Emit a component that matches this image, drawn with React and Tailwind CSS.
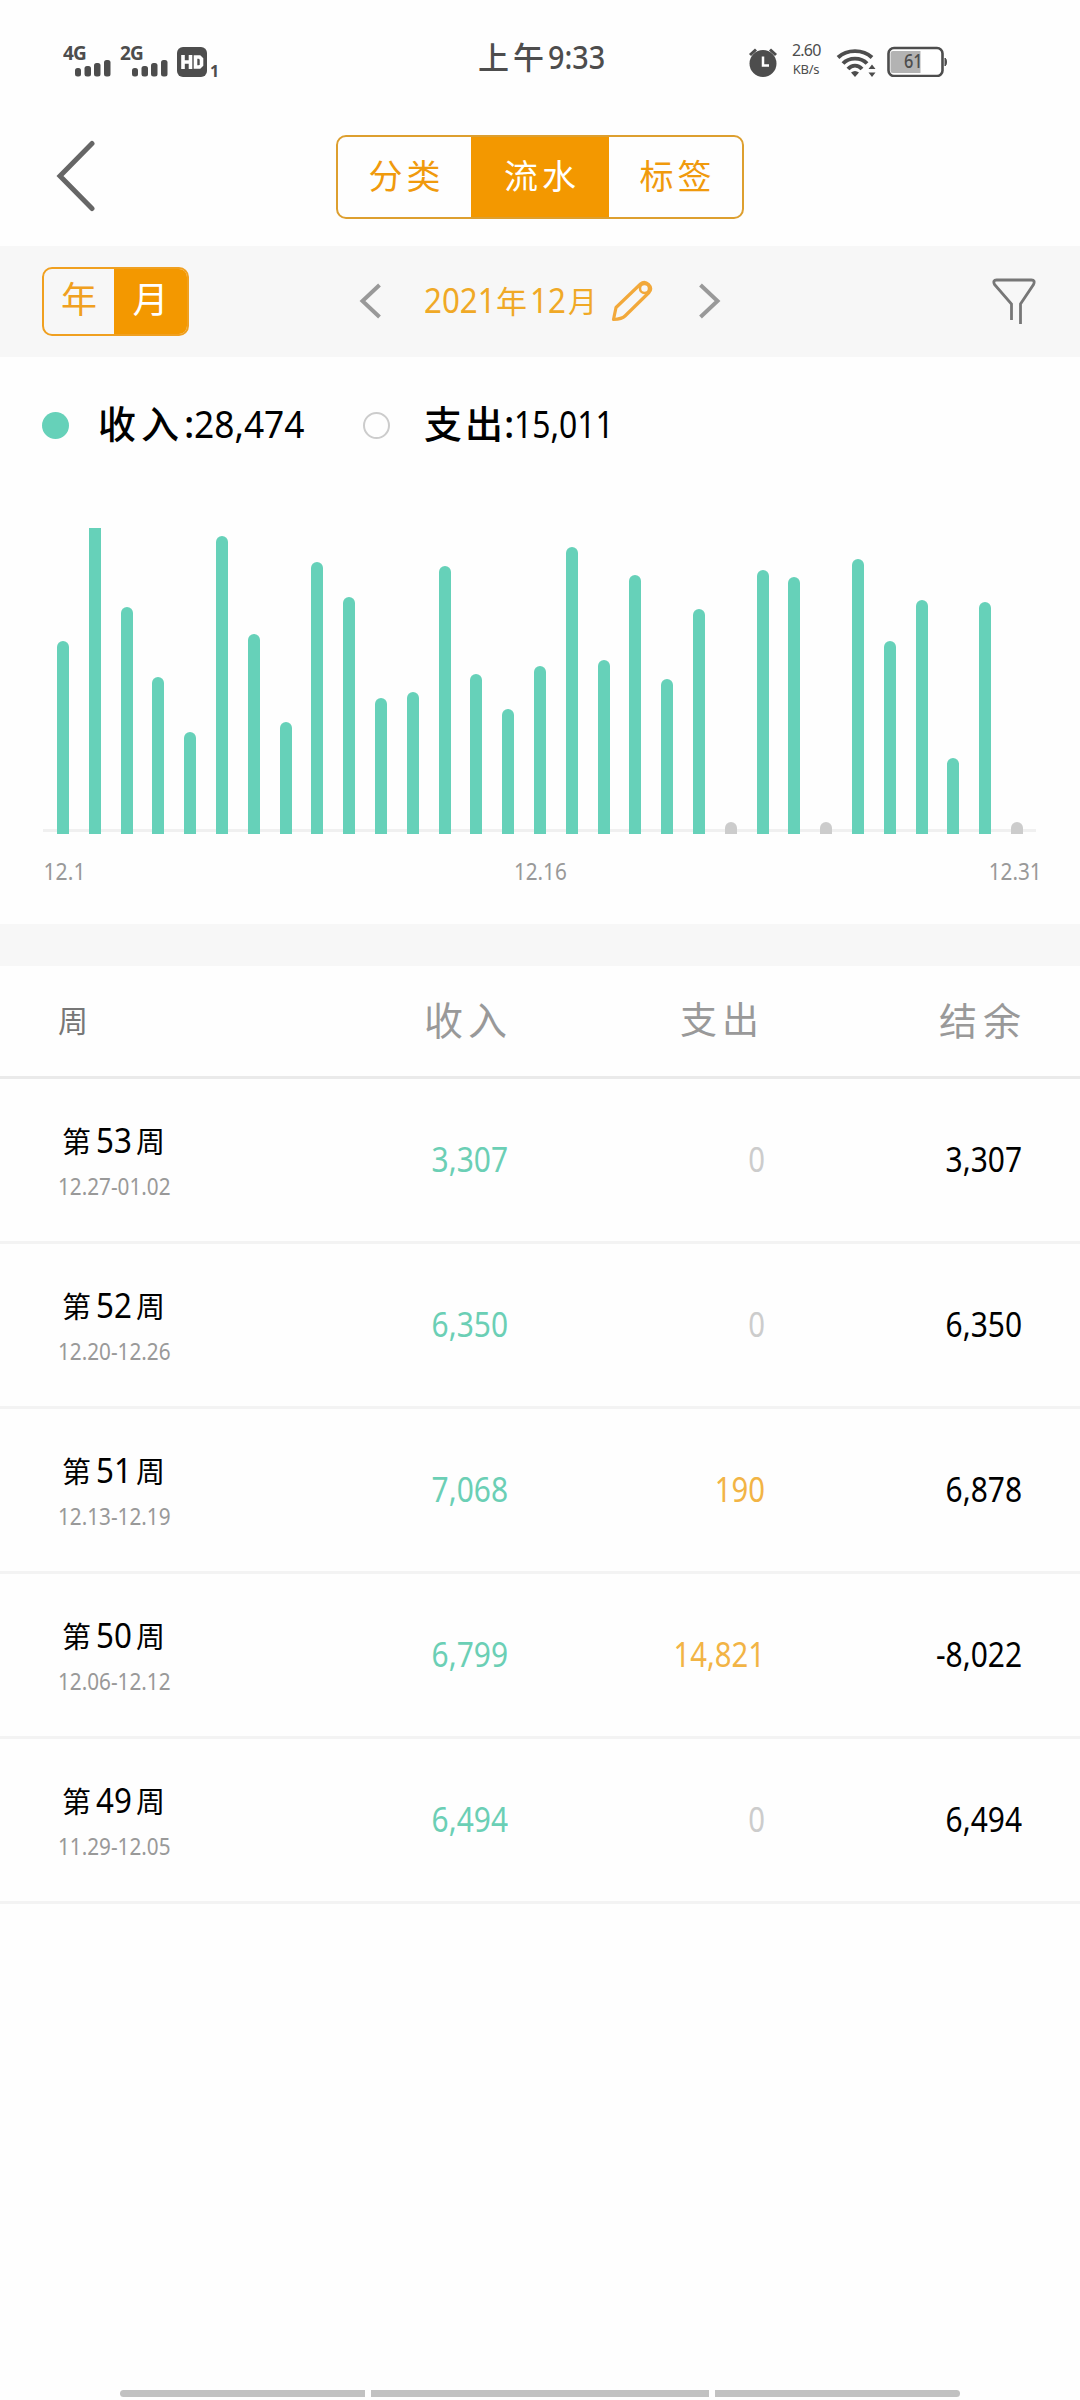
const tabs = ["分类", "流水", "标签"];

// bar height in px for each day of the month, 0 = no record
const days = [
  193.5, 320, 227, 157, 102.5, 298, 200.5, 112, 272, 237, 136.5, 142, 268.5, 160, 125, 168.5,
  287.5, 174, 259, 155, 225, 0, 264, 257.5, 0, 275, 193.5, 234, 76, 232, 0,
];

const weeks = [
  { no: 53, range: "12.27-01.02", income: "3,307", expense: "0", balance: "3,307" },
  { no: 52, range: "12.20-12.26", income: "6,350", expense: "0", balance: "6,350" },
  { no: 51, range: "12.13-12.19", income: "7,068", expense: "190", balance: "6,878" },
  { no: 50, range: "12.06-12.12", income: "6,799", expense: "14,821", balance: "-8,022" },
  { no: 49, range: "11.29-12.05", income: "6,494", expense: "0", balance: "6,494" },
];

function Signal({ label }) {
  return (
    <div className="relative w-[48px] h-[34px]">
      <span className="absolute left-0 -top-[4px] text-[20px] leading-[28px] font-bold tracking-[-0.8px] origin-left scale-x-[0.95]">{label}</span>
      <svg className="w-[48px] h-[34px]" viewBox="0 0 48 34" fill="#4d4d4d">
        <rect x="12" y="25" width="6" height="8.500" rx="2.500" />
        <rect x="21.500" y="23" width="6.500" height="10.500" rx="2.500" />
        <rect x="31" y="20" width="6.500" height="13.500" rx="2.500" />
        <rect x="41" y="17" width="6.500" height="16.500" rx="2.500" />
      </svg>
    </div>
  );
}

function StatusBar() {
  return (
    <div className="relative flex justify-between h-[108px] pl-[63px] pr-[133px] pt-[43px] text-[#4d4d4d]">
      <div className="flex">
        <Signal label="4G" />
        <div className="w-[9px]" />
        <Signal label="2G" />
        <svg className="ml-[9px] w-[30px] h-[34px]" viewBox="0 0 30 34">
          <rect x="0" y="4" width="30" height="30" rx="6" fill="#4d4d4d" />
          <path d="M6 12v14M13.500 12v14M6 19h7.500M18.500 14h4l2 2v6l-2 2h-4z" stroke="#fff" strokeWidth="3.600" fill="none" />
        </svg>
        <span className="ml-[3px] mt-[16px] text-[16px] leading-[24px] font-bold">1</span>
      </div>

      <div className="absolute left-[478px] top-[33px] flex h-[48px] leading-[48px] font-medium whitespace-nowrap">
        <span className="text-[31px] tracking-[4px]">上午</span>
        <span className="text-[33px] origin-left scale-x-[0.87]">9:33</span>
      </div>

      <div className="flex">
        <svg className="w-[30px] h-[34px]" viewBox="0 0 30 34">
          <circle cx="15" cy="20.500" r="13.500" fill="#4d4d4d" />
          <path d="M2 12l6-5.500M28 12l-6-5.500" stroke="#4d4d4d" strokeWidth="3" />
          <path d="M15 13.500v9h6" stroke="#fff" strokeWidth="2.500" fill="none" />
        </svg>
        <div className="ml-[14px] w-[28px] text-[16px] leading-[19px] text-center tracking-[-0.8px]">
          <div className="-mt-[2px]">2.60</div>
          <div className="text-[13px] tracking-[-0.3px]">KB/s</div>
        </div>
        <svg className="ml-[16px] w-[42px] h-[34px]" viewBox="0 0 42 34">
          <g fill="none" stroke="#4d4d4d" strokeWidth="3.900">
            <path d="M2 14.500C11 6 27 6 36 14.500" />
            <path d="M7 20.500C13 14 25 14 31 20.500" />
            <path d="M12 26C16 21.500 22 21.500 26 26" />
          </g>
          <path d="M15 29.500q4-3 8 0l-4 4.500zM36 21.500l3.500 4.500h-7zM36 34l3.500-4.500h-7z" fill="#4d4d4d" />
        </svg>
        <div className="relative ml-[9px] w-[60px] h-[34px]">
          <svg className="w-[60px] h-[34px]" viewBox="0 0 60 34">
            <rect x="1.500" y="5" width="54" height="28" rx="5.500" fill="#fff" stroke="#4d4d4d" strokeWidth="2.600" />
            <path d="M6 8h27.500v22H6a2.500 2.500 0 0 1-2.500-2.500v-17A2.500 2.500 0 0 1 6 8z" fill="#b3b3b3" />
            <path d="M58 15v8q1.500-1 1.500-4t-1.500-4z" fill="#4d4d4d" stroke="#4d4d4d" />
          </svg>
          <span className="absolute left-[17px] top-[4px] text-[19px] leading-[28px] font-medium origin-left scale-x-[0.86]">61</span>
        </div>
      </div>
    </div>
  );
}

function Chevron({ flip }) {
  return (
    <svg className={`-mt-[2px] w-[22px] h-[36px] ${flip ? "rotate-180" : ""}`} viewBox="0 0 22 36">
      <path d="M20.500 2L3.500 18l17 16" fill="none" stroke="#999" strokeWidth="4" />
    </svg>
  );
}

function Chart() {
  return (
    <div>
      <div className="relative h-[306px] overflow-hidden">
        <div className="absolute left-[43px] right-[44px] top-[301px] h-[3px] bg-[#f0f0f0]" />
        <div className="relative flex items-end justify-between h-full px-[57px]">
          {days.map((h, i) => (
            <div
              key={i}
              className={`w-[12px] shrink-0 rounded-t-full ${h ? "bg-[#66d1b9]" : "bg-[#ccc]"}`}
              style={{ height: h || 12 }}
            />
          ))}
        </div>
      </div>
      <div className="grid grid-cols-3 px-[38px] mt-[21px] h-[33px] text-[23px] leading-[32px] text-[#999]">
        <span className="pl-[6px] origin-left scale-x-[0.92]">12.1</span>
        <span className="text-center scale-x-[0.9]">12.16</span>
        <span className="text-right origin-right scale-x-[0.9]">12.31</span>
      </div>
    </div>
  );
}

export default function App() {
  return (
    <div className="flex flex-col w-[1080px] h-[2400px] bg-[#fefefe] text-black overflow-hidden font-['Noto_Sans','Noto_Sans_CJK_SC',sans-serif]">
      <StatusBar />

      {/* Title bar */}
      <div className="grid grid-cols-[336px_408px_336px] h-[138px] pt-[27px]">
        <svg className="ml-[56px] mt-[5px] w-[40px] h-[72px]" viewBox="0 0 40 72">
          <path d="M36 3.500L4 36l32 32.500" fill="none" stroke="#666" strokeWidth="5" strokeLinecap="round" />
        </svg>
        <div className="flex h-[84px] rounded-[10px] border-2 border-[#dd9f2f] overflow-hidden">
          {tabs.map((t) => (
            <div
              key={t}
              className={`pl-[4px] text-center text-[34px] leading-[78px] tracking-[4px] ${t === "流水" ? "w-[138px] bg-[#f39800] text-white" : "flex-1 text-[#f09a0c]"}`}
            >
              {t}
            </div>
          ))}
        </div>
      </div>

      {/* Period picker */}
      <div className="flex items-center h-[111px] pl-[42px] pr-[42px] bg-[#f7f7f7]">
        <div className="flex w-[147px] h-[69px] rounded-[10px] border-2 border-[#f0a020] overflow-hidden text-[36px] leading-[62px] text-center">
          <div className="w-[70px] text-[#f0a020]">年</div>
          <div className="flex-1 bg-[#f39800] text-white">月</div>
        </div>
        <div className="ml-[170px]"><Chevron /></div>
        <div className="ml-[43px] -mt-[2px] w-[172px] flex items-baseline text-[34px] leading-[48px] text-[#f0a926] whitespace-nowrap">
          <span className="w-[72px] origin-left scale-x-[0.92]">2021</span>
          <span className="w-[35px] pr-[3px] text-center text-[31px]">年</span>
          <span className="w-[38px] origin-left scale-x-[0.92]">12</span>
          <span className="text-[29px]">月</span>
        </div>
        <svg className="ml-[15px] -mt-[2px] w-[42px] h-[42px]" viewBox="0 0 42 42" fill="none" stroke="#f2a93b" strokeWidth="3.200">
          <path d="M2.500 39.500l2.500-12L29.500 4q4-3.500 8 .500t.500 8L14 36q-3 3-11.500 3.500z" strokeLinejoin="round" />
          <circle cx="33.500" cy="8.500" r="4.500" strokeWidth="2.500" />
        </svg>
        <div className="ml-[46px]"><Chevron flip /></div>
        <svg className="ml-auto -mt-[2px] w-[48px] h-[48px]" viewBox="0 0 48 48">
          <path d="M21.500 43V27L4.500 7.500Q2.500 3 6.500 3h35q4 0 2 4.500L30.500 27v20" fill="none" stroke="#777" strokeWidth="2.800" />
        </svg>
      </div>

      {/* Totals */}
      <div className="flex items-center h-[137px] pl-[42px] mb-[34px] text-[38px] leading-[52px] whitespace-nowrap">
        <div className="w-[27px] h-[27px] rounded-full bg-[#66d1b9]" />
        <div className="ml-[29px] -mt-[6px] w-[265px] flex items-baseline">
          <span className="w-[86px] font-medium tracking-[5px]">收入</span>
          <span className="w-[10px] font-medium">:</span>
          <span className="origin-left scale-x-[0.93]">28,474</span>
        </div>
        <div className="w-[27px] h-[27px] rounded-full border-2 border-[#ccc]" />
        <div className="ml-[34px] -mt-[6px] flex items-baseline">
          <span className="w-[80px] font-medium tracking-[3px]">支出</span>
          <span className="w-[10px] font-medium">:</span>
          <span className="origin-left scale-x-[0.84]">15,011</span>
        </div>
      </div>

      <Chart />

      <div className="mt-[36px] h-[42px] bg-[#f7f7f7]" />

      {/* Weekly table */}
      <div className="grid grid-cols-[193px_257px_257px_257px] items-center h-[113px] pl-[58px] pb-[2px] border-b-[3px] border-[#eaeaea] text-right text-[37px] text-[#999]">
        <span className="text-left text-[30px] text-[#777]">周</span>
        <span className="text-[39px] tracking-[5px] -mr-[4px]">收入</span>
        <span className="tracking-[5px] mr-[1px]">支出</span>
        <span className="text-[38px] tracking-[6px] -mr-[5px]">结余</span>
      </div>
      {weeks.map((w) => (
        <div
          key={w.no}
          className="grid grid-cols-[193px_257px_257px_257px] items-center h-[165px] pl-[58px] border-b-[3px] border-[#f3f3f3] text-right text-[34px]"
        >
          <div className="text-left whitespace-nowrap -mt-[4px]">
            <div className="flex items-baseline pl-[4px] leading-[48px] h-[46px]">
              <span className="text-[29px] w-[34px]">第</span>
              <span className="w-[40px] origin-left scale-x-[0.92]">{w.no}</span>
              <span className="text-[29px]">周</span>
            </div>
            <div className="h-[34px] mt-[4px] text-[23px] leading-[40px] origin-left scale-x-[0.9] text-[#999]">{w.range}</div>
          </div>
          <span className="-mt-[2px] origin-right scale-x-[0.88] text-[#6bcfb5]">{w.income}</span>
          <span className={`-mt-[2px] origin-right scale-x-[0.86] ${w.expense === "0" ? "text-[#ccc]" : "text-[#f2b445]"}`}>{w.expense}</span>
          <span className="-mt-[2px] origin-right scale-x-[0.88]">{w.balance}</span>
        </div>
      ))}

      {/* Gesture bar */}
      <div className="flex gap-[6px] mt-auto mb-[3px] mx-[120px] h-[7px]">
        <div className="w-[245px] bg-[#c1c1c1] rounded-l-full" />
        <div className="flex-1 bg-[#c1c1c1]" />
        <div className="w-[245px] bg-[#c1c1c1] rounded-r-full" />
      </div>
    </div>
  );
}
